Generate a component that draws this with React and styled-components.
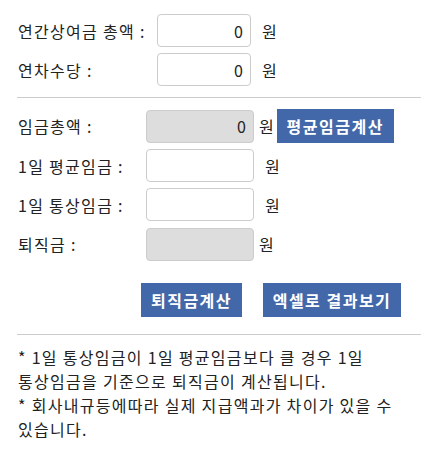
import React from "react";
import styled, { createGlobalStyle } from "styled-components";

const GlobalStyle = createGlobalStyle`
  body {
    margin: 0;
    background: #fff;
    font-family: "Noto Sans CJK KR", "Noto Sans", sans-serif;
    color: #222;
  }
`;

const Wrap = styled.div`
  width: 404px;
  padding: 14px 0 0 17px;
`;

const Section = styled.div`
  display: flex;
  flex-direction: column;
  gap: ${(p) => p.gap}px;
  padding-left: 1px;
`;

const Row = styled.div`
  display: flex;
  align-items: center;
  height: ${(p) => p.h || 33}px;
`;

const Label = styled.div`
  width: ${(p) => p.width}px;
  font-size: 16px;
  line-height: 20px;
  letter-spacing: 1.3px;
  white-space: nowrap;
`;

const Input = styled.input`
  box-sizing: border-box;
  width: ${(p) => p.width}px;
  height: 33px;
  border: 1px solid #cccccc;
  border-radius: 4px;
  background: ${(p) => (p.readOnly ? "#dddddd" : "#fff")};
  padding: 0 7px;
  text-align: right;
  font-family: inherit;
  font-size: 16px;
  color: #222;
  outline: none;
`;

const Unit = styled.span`
  margin-left: ${(p) => p.gap}px;
  font-size: 16px;
`;

const Button = styled.button`
  width: ${(p) => p.width}px;
  height: 34px;
  padding: 0;
  border: none;
  background: #4268aa;
  color: #fff;
  font-family: inherit;
  font-size: 16px;
  font-weight: 700;
  letter-spacing: 1.5px;
  white-space: nowrap;
  cursor: pointer;
  margin-left: ${(p) => p.gap || 0}px;
`;

const Divider = styled.hr`
  border: none;
  border-top: 1px solid #cccccc;
  margin: ${(p) => p.m};
`;

const Actions = styled.div`
  display: flex;
  justify-content: flex-end;
  gap: 21px;
  padding-right: 20px;
  margin-top: 22px;
`;

const Notes = styled.div`
  padding-left: 1px;
  font-size: 16px;
  line-height: 24px;
  letter-spacing: 1.3px;
  word-break: keep-all;
`;

const App = () => {
  return (
    <>
      <GlobalStyle />
      <Wrap>
        <Section gap={6}>
          <Row>
            <Label width={139}>연간상여금 총액 :</Label>
            <Input width={94} defaultValue="0" />
            <Unit gap={11}>원</Unit>
          </Row>
          <Row>
            <Label width={139}>연차수당 :</Label>
            <Input width={94} defaultValue="0" />
            <Unit gap={11}>원</Unit>
          </Row>
        </Section>
        <Divider m="11px 0 11px 0" />
        <Section gap={6}>
          <Row h={34}>
            <Label width={128}>임금총액 :</Label>
            <Input width={108} defaultValue="0" readOnly />
            <Unit gap={5}>원</Unit>
            <Button width={117} gap={3}>
              평균임금계산
            </Button>
          </Row>
          <Row>
            <Label width={128}>1일 평균임금 :</Label>
            <Input width={108} />
            <Unit gap={11}>원</Unit>
          </Row>
          <Row>
            <Label width={128}>1일 통상임금 :</Label>
            <Input width={108} />
            <Unit gap={11}>원</Unit>
          </Row>
          <Row h={34}>
            <Label width={128}>퇴직금 :</Label>
            <Input width={108} readOnly />
            <Unit gap={5}>원</Unit>
          </Row>
        </Section>
        <Actions>
          <Button width={101}>퇴직금계산</Button>
          <Button width={138}>엑셀로 결과보기</Button>
        </Actions>
        <Divider m="17px 0 10px 0" />
        <Notes>
          * 1일 통상임금이 1일 평균임금보다 클 경우 1일 통상임금을 기준으로
          퇴직금이 계산됩니다.
          <br />* 회사내규등에따라 실제 지급액과가 차이가 있을 수 있습니다.
        </Notes>
      </Wrap>
    </>
  );
};

export default App;
